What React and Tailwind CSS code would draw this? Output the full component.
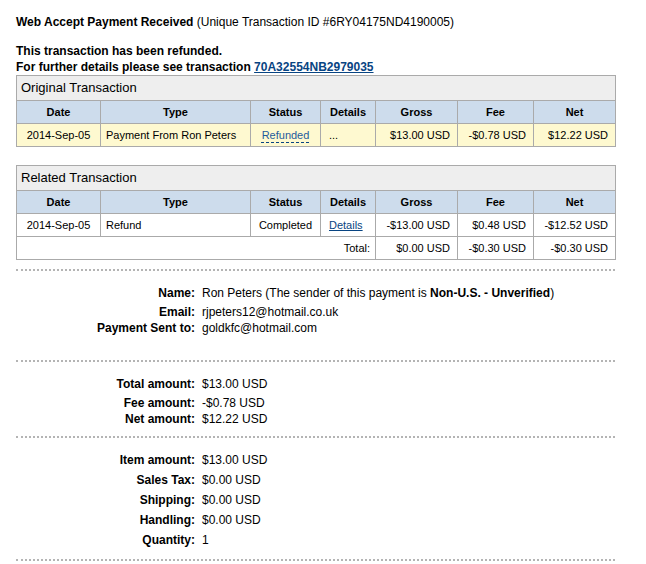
import React from "react";

const font = { fontFamily: '"Liberation Sans", Arial, sans-serif' };

function Cols() {
  return (
    <colgroup>
      <col className="w-[84px]" />
      <col className="w-[150px]" />
      <col className="w-[70px]" />
      <col className="w-[55px]" />
      <col className="w-[82px]" />
      <col className="w-[76px]" />
      <col className="w-[82px]" />
    </colgroup>
  );
}

function HeaderRow() {
  const th = "border border-[#aaaaaa] font-bold text-center px-1";
  return (
    <tr className="h-[23px] bg-[#cddcec]">
      <th className={th}>Date</th>
      <th className={th}>Type</th>
      <th className={th}>Status</th>
      <th className={th}>Details</th>
      <th className={th}>Gross</th>
      <th className={th}>Fee</th>
      <th className={th}>Net</th>
    </tr>
  );
}

const td = "border border-[#aaaaaa] px-[5px] whitespace-nowrap";

function Sep() {
  return <div className="border-t-2 border-dotted border-[#b4b4b4] w-[599px]" />;
}

function Row({ label, children, className = "" }) {
  return (
    <div className={"flex h-4 leading-4 " + className}>
      <div className="w-[186px] text-right font-bold pr-[7px]">{label}</div>
      <div>{children}</div>
    </div>
  );
}

export default function App() {
  return (
    <div style={font} className="w-[646px] h-[564px] bg-white text-black text-[12px] pl-4 pt-[14px] overflow-hidden">
      <div className="leading-4 h-4">
        <span className="font-bold">Web Accept Payment Received</span> (Unique Transaction ID #6RY04175ND4190005)
      </div>
      <div className="mt-[13px] font-bold leading-4">
        <div>This transaction has been refunded.</div>
        <div>
          For further details please see transaction{" "}
          <a className="text-[#084482] underline">70A32554NB2979035</a>
        </div>
      </div>

      <table className="table-fixed border-collapse w-[600px] text-[11px]">
        <Cols />
        <tbody>
          <tr className="h-[25px] bg-[#eeeeee]">
            <td colSpan={7} className="border border-[#aaaaaa] px-[4px] text-[13px]">Original Transaction</td>
          </tr>
          <HeaderRow />
          <tr className="h-[23px] bg-[#fef9d0]">
            <td className={td + " text-center"}>2014-Sep-05</td>
            <td className={td}>Payment From Ron Peters</td>
            <td className={td + " text-center"}>
              <span className="text-[#1f5b9c] underline decoration-dashed decoration-[#084482] underline-offset-[3px]">Refunded</span>
            </td>
            <td className={td + " pl-2"}>...</td>
            <td className={td + " text-right pr-[7px]"}>$13.00 USD</td>
            <td className={td + " text-right pr-[7px]"}>-$0.78 USD</td>
            <td className={td + " text-right pr-[7px]"}>$12.22 USD</td>
          </tr>
        </tbody>
      </table>

      <table className="table-fixed border-collapse w-[600px] text-[11px] mt-[18px]">
        <Cols />
        <tbody>
          <tr className="h-[25px] bg-[#eeeeee]">
            <td colSpan={7} className="border border-[#aaaaaa] px-[4px] text-[13px]">Related Transaction</td>
          </tr>
          <HeaderRow />
          <tr className="h-[23px] bg-white">
            <td className={td + " text-center"}>2014-Sep-05</td>
            <td className={td}>Refund</td>
            <td className={td + " text-center"}>Completed</td>
            <td className={td + " pl-2"}>
              <a className="text-[#084482] underline">Details</a>
            </td>
            <td className={td + " text-right pr-[7px]"}>-$13.00 USD</td>
            <td className={td + " text-right pr-[7px]"}>$0.48 USD</td>
            <td className={td + " text-right pr-[7px]"}>-$12.52 USD</td>
          </tr>
          <tr className="h-[23px] bg-white">
            <td colSpan={4} className={td + " text-right"}>Total:</td>
            <td className={td + " text-right pr-[7px]"}>$0.00 USD</td>
            <td className={td + " text-right pr-[7px]"}>-$0.30 USD</td>
            <td className={td + " text-right pr-[7px]"}>-$0.30 USD</td>
          </tr>
        </tbody>
      </table>

      <div className="mt-[9px]"><Sep /></div>

      <div className="pt-[14px] pb-[24px]">
        <Row label="Name:" className="mb-[3px]">
          Ron Peters (The sender of this payment is <b>Non-U.S. - Unverified</b>)
        </Row>
        <Row label="Email:">rjpeters12@hotmail.co.uk</Row>
        <Row label="Payment Sent to:">goldkfc@hotmail.com</Row>
      </div>
      <Sep />

      <div className="pt-[14px] pb-[9px]">
        <Row label="Total amount:" className="mb-[3px]">$13.00 USD</Row>
        <Row label="Fee amount:">-$0.78 USD</Row>
        <Row label="Net amount:">$12.22 USD</Row>
      </div>
      <Sep />

      <div className="pt-[14px] pb-[11px] flex flex-col gap-1">
        <Row label="Item amount:">$13.00 USD</Row>
        <Row label="Sales Tax:">$0.00 USD</Row>
        <Row label="Shipping:">$0.00 USD</Row>
        <Row label="Handling:">$0.00 USD</Row>
        <Row label="Quantity:">1</Row>
      </div>
      <Sep />
    </div>
  );
}
